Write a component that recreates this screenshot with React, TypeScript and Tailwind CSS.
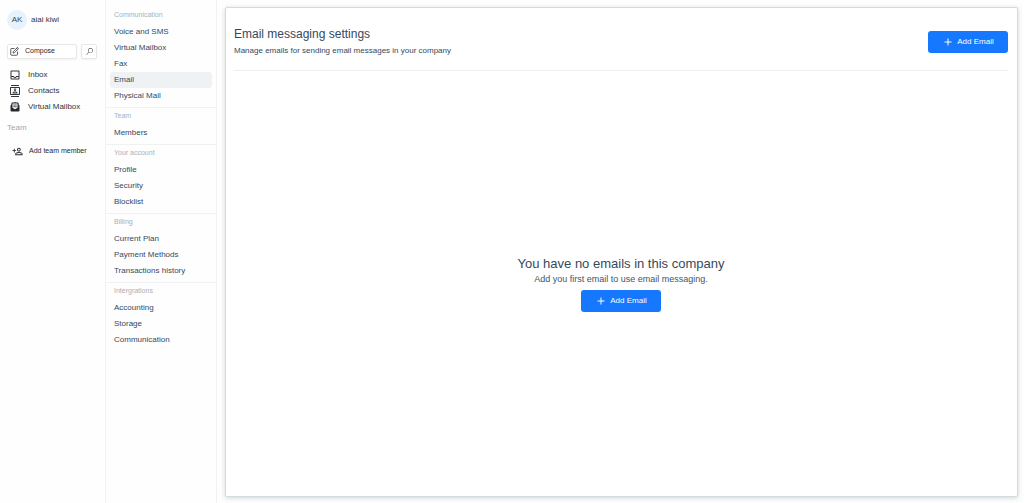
import type { ReactNode } from "react";
import { FiEdit } from "react-icons/fi";
import { VscSearch } from "react-icons/vsc";
import {
  MdOutlineInbox,
  MdOutlineContacts,
  MdOutlinePersonAddAlt,
  MdAdd,
} from "react-icons/md";

const sections = [
  {
    title: "Communication",
    items: ["Voice and SMS", "Virtual Mailbox", "Fax", "Email", "Physical Mail"],
  },
  { title: "Team", items: ["Members"] },
  { title: "Your account", items: ["Profile", "Security", "Blocklist"] },
  {
    title: "Billing",
    items: ["Current Plan", "Payment Methods", "Transactions history"],
  },
  { title: "Intergrations", items: ["Accounting", "Storage", "Communication"] },
];

function OpenMailIcon() {
  return (
    <svg viewBox="0 0 24 24" className="size-3 text-[#26292d]" aria-hidden="true">
      <path
        d="M3 10 Q3 8.5 4.2 7.7 L10.5 3 Q12 2 13.5 3 L19.8 7.7 Q21 8.5 21 10 V19 a2 2 0 0 1-2 2 H5 a2 2 0 0 1-2-2 Z"
        fill="currentColor"
      />
      <path d="M5 8 V4.5 Q5 3 6.5 3 H17.5 Q19 3 19 4.5 V8" fill="currentColor" />
      <path d="M7 5 H17 V13.5 L12 16.5 L7 13.5 Z" fill="#fff" />
      <path d="M8.5 8 H15.5 M8.5 11.5 H15.5" stroke="currentColor" strokeWidth="1.6" />
    </svg>
  );
}

function MainLink({ icon, children }: { icon: ReactNode; children: ReactNode }) {
  return (
    <li>
      <a href="#" className="flex h-4 items-center gap-[7px] text-[8px] text-[#33373b]">
        {icon}
        {children}
      </a>
    </li>
  );
}

function AddEmailButton() {
  return (
    <button
      type="button"
      className="flex h-[22px] w-20 shrink-0 items-center justify-center gap-[3px] rounded-[3px] bg-[#1677ff] text-[8px] text-white"
    >
      <MdAdd className="size-3" />
      Add Email
    </button>
  );
}

export default function App() {
  return (
    <div className="flex min-h-screen bg-[#fefefe] font-['Liberation_Sans',Arial,sans-serif]">
      <aside className="w-[106px] shrink-0 border-r border-[#eff1f3] px-[7px] pt-[10px]">
        <div className="flex items-center gap-1">
          <span className="flex size-5 items-center justify-center rounded-full bg-[#e6f2fc] text-[8px] text-[#3f4954]">
            AK
          </span>
          <span className="text-[8px] text-[#33373b]">aiai kiwi</span>
        </div>
        <div className="mt-[14px] flex gap-1">
          <button
            type="button"
            className="flex h-[15px] w-[70px] items-center gap-[6px] rounded-[2px] border border-[#e7e7e7] bg-white px-[2px] text-[7px] text-[#26292d] shadow-xs"
          >
            <FiEdit className="size-[9px]" />
            Compose
          </button>
          <button
            type="button"
            aria-label="Search"
            className="flex h-[15px] w-4 items-center justify-center rounded-[2px] border border-[#e7e7e7] bg-white text-[#26292d] shadow-xs"
          >
            <VscSearch className="size-[7px]" />
          </button>
        </div>
        <nav aria-label="Main" className="mt-2 pl-[2px]">
          <ul>
            <MainLink icon={<MdOutlineInbox className="size-3" />}>Inbox</MainLink>
            <MainLink icon={<MdOutlineContacts className="size-3" />}>Contacts</MainLink>
            <MainLink icon={<OpenMailIcon />}>Virtual Mailbox</MainLink>
          </ul>
        </nav>
        <h2 className="mt-[7px] text-[8px] leading-3 text-[#a3a7ab]">Team</h2>
        <button
          type="button"
          className="mt-[9px] flex h-4 items-center gap-[6px] pl-[5px] text-[7px] text-[#26292d]"
        >
          <MdOutlinePersonAddAlt className="size-[11px] -scale-x-100" />
          Add team member
        </button>
      </aside>

      <nav aria-label="Settings" className="w-[111px] shrink-0 border-r border-[#eff1f3] pt-[7px]">
        {sections.map((section) => (
          <section
            key={section.title}
            className="border-b border-[#eff1f3] px-1 pb-[3px] last:border-b-0"
          >
            <h2 className="px-1 text-[7px] leading-4 text-[#a9b0b9]">{section.title}</h2>
            <ul className="pt-px">
              {section.items.map((item) => (
                <li key={item}>
                  <a
                    href="#"
                    aria-current={item === "Email" ? "page" : undefined}
                    className="block rounded-[3px] px-1 text-[8px] leading-4 text-[#34495e] aria-[current=page]:bg-[#eff2f5]"
                  >
                    {item}
                  </a>
                </li>
              ))}
            </ul>
          </section>
        ))}
      </nav>

      <main className="flex min-w-0 flex-1 pt-[7px] pr-[6px] pb-[6px] pl-2">
        <div className="flex flex-1 flex-col rounded-[2px] border border-[#d0dcdf] bg-white pr-[9px] pl-2 shadow-[0_1px_5px_rgba(0,30,40,0.18)]">
          <header className="flex items-center justify-between border-b border-[#edf0f2] pt-[18px] pb-[13px]">
            <div>
              <h1 className="text-[12px] leading-4 text-[#34495e]">Email messaging settings</h1>
              <p className="mt-[3px] text-[8px] leading-3 text-[#34495e]">
                Manage emails for sending email messages in your company
              </p>
            </div>
            <AddEmailButton />
          </header>
          <section className="flex flex-1 flex-col items-center justify-center">
            <h2 className="text-[13px] leading-4 text-[#34495e]">You have no emails in this company</h2>
            <p className="mb-1 text-[9px] leading-[14px] text-[#42546a]">
              Add you first email to use email messaging.
            </p>
            <AddEmailButton />
          </section>
        </div>
      </main>
    </div>
  );
}
